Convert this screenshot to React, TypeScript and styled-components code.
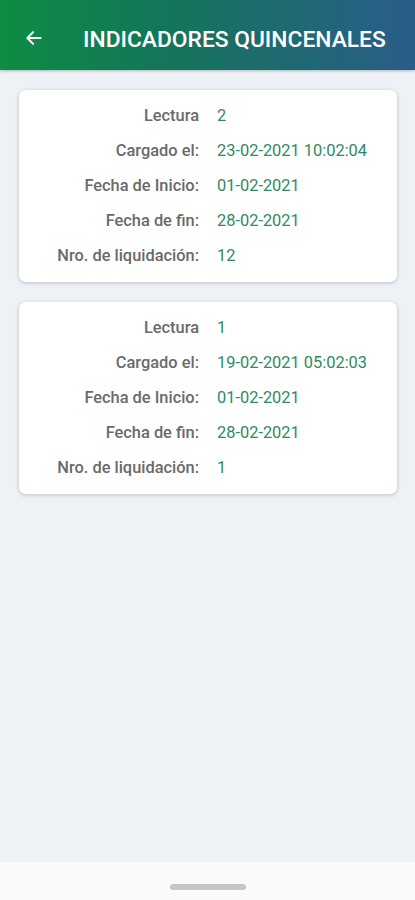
import React from "react";
import styled, { createGlobalStyle } from "styled-components";

const GlobalStyle = createGlobalStyle`
  html, body {
    margin: 0;
    padding: 0;
    background: #eef1f5;
    font-family: Roboto, "Noto Sans", Arial, sans-serif;
  }
`;

const Screen = styled.div`
  width: 415px;
  height: 900px;
  display: flex;
  flex-direction: column;
  background: #eef1f5;
  overflow: hidden;
`;

const Header = styled.header`
  height: 70px;
  box-sizing: border-box;
  flex-shrink: 0;
  display: flex;
  align-items: center;
  padding: 8px 0 0 22px;
  background: linear-gradient(90deg, #0d8c43 0%, #14755a 40%, #2a5d8a 100%);
  box-shadow: 0 1px 3px rgba(0, 0, 0, 0.25);
  color: #ffffff;
`;

const BackButton = styled.button`
  width: 24px;
  height: 24px;
  padding: 0;
  border: none;
  background: none;
  display: flex;
  align-items: center;
  justify-content: center;
  margin-right: 37px;
  margin-top: -3px;
`;

const Title = styled.h1`
  margin: 0;
  font-size: 22.8px;
  font-weight: 500;
  white-space: nowrap;
`;

const Content = styled.main`
  flex: 1;
  display: flex;
  flex-direction: column;
  gap: 20px;
  padding: 20px 18px 0 19px;
`;

const Card = styled.section`
  background: #ffffff;
  border-radius: 7px;
  box-shadow: 0 1px 4px rgba(0, 0, 0, 0.2);
  padding: 8px 0 9px;
  display: grid;
  grid-template-columns: 180px 1fr;
  column-gap: 18px;
`;

const Label = styled.span`
  text-align: right;
  font-size: 16.4px;
  font-weight: 500;
  color: #6a6a6a;
  line-height: 35px;
`;

const Value = styled.span`
  font-size: 16.4px;
  color: #2f8a63;
  line-height: 35px;
`;

const NavBar = styled.div`
  height: 38px;
  flex-shrink: 0;
  background: #fafafc;
  display: flex;
  align-items: flex-start;
  justify-content: center;
  padding-top: 22px;
  box-sizing: border-box;
`;

const Handle = styled.div`
  width: 76px;
  height: 6px;
  border-radius: 3px;
  background: #c6c6c9;
`;

interface Indicador {
  lectura: string;
  cargado: string;
  inicio: string;
  fin: string;
  liquidacion: string;
}

const data: Indicador[] = [
  {
    lectura: "2",
    cargado: "23-02-2021 10:02:04",
    inicio: "01-02-2021",
    fin: "28-02-2021",
    liquidacion: "12",
  },
  {
    lectura: "1",
    cargado: "19-02-2021 05:02:03",
    inicio: "01-02-2021",
    fin: "28-02-2021",
    liquidacion: "1",
  },
];

function IndicadorCard({ item }: { item: Indicador }) {
  const rows: [string, string][] = [
    ["Lectura", item.lectura],
    ["Cargado el:", item.cargado],
    ["Fecha de Inicio:", item.inicio],
    ["Fecha de fin:", item.fin],
    ["Nro. de liquidación:", item.liquidacion],
  ];
  return (
    <Card>
      {rows.map(([label, value]) => (
        <React.Fragment key={label}>
          <Label>{label}</Label>
          <Value>{value}</Value>
        </React.Fragment>
      ))}
    </Card>
  );
}

export default function App() {
  return (
    <Screen>
      <GlobalStyle />
      <Header>
        <BackButton aria-label="Volver">
          <svg width="20" height="20" viewBox="0 0 24 24" fill="none">
            <path
              d="M20 12H5M11 5l-7 7 7 7"
              stroke="#ffffff"
              strokeWidth="2.4"
              strokeLinecap="round"
              strokeLinejoin="round"
            />
          </svg>
        </BackButton>
        <Title>INDICADORES QUINCENALES</Title>
      </Header>
      <Content>
        {data.map((item, i) => (
          <IndicadorCard key={i} item={item} />
        ))}
      </Content>
      <NavBar>
        <Handle />
      </NavBar>
    </Screen>
  );
}
